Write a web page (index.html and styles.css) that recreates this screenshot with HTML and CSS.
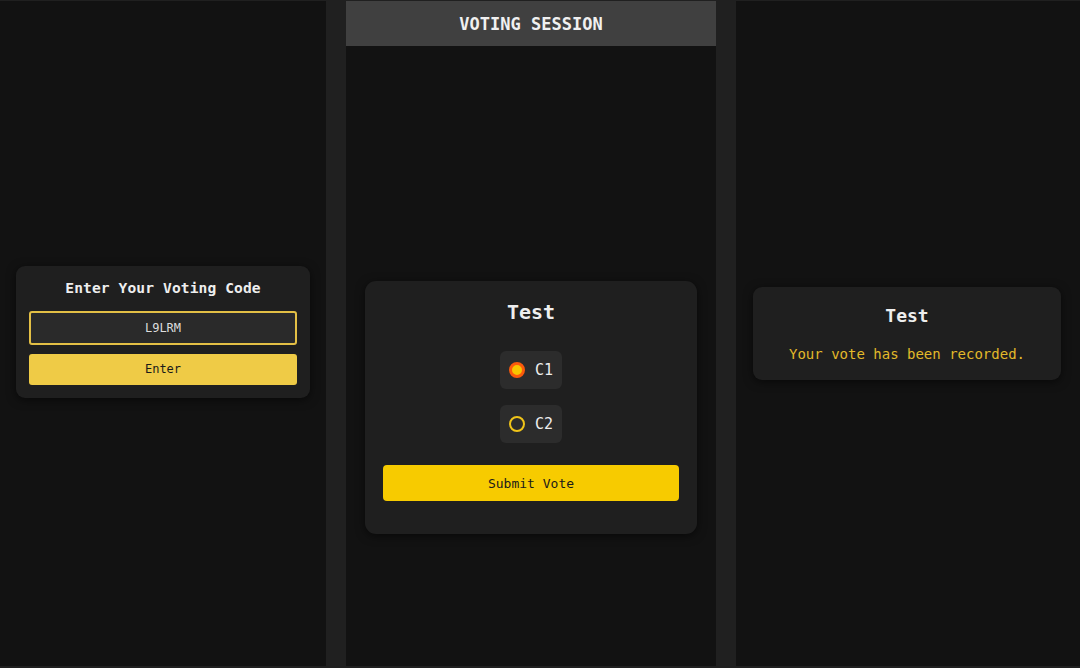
FILE: index.html
```html
<!DOCTYPE html>
<html>
<head>
<meta charset="utf-8">
<link rel="stylesheet" href="styles.css">
</head>
<body>
<div class="screens">
  <section class="panel panel-left">
    <div class="card code-card">
      <h2 class="code-title">Enter Your Voting Code</h2>
      <div class="code-input">L9LRM</div>
      <button class="btn btn-enter">Enter</button>
    </div>
  </section>
  <section class="panel panel-mid">
    <header class="session-header">VOTING SESSION</header>
    <div class="session-body">
      <div class="card vote-card">
        <h2 class="vote-title">Test</h2>
        <div class="options">
          <label class="option"><span class="radio radio-on"></span><span class="opt-label">C1</span></label>
          <label class="option"><span class="radio"></span><span class="opt-label">C2</span></label>
        </div>
        <button class="btn btn-submit">Submit Vote</button>
      </div>
    </div>
  </section>
  <section class="panel panel-right">
    <div class="card done-card">
      <h2 class="done-title">Test</h2>
      <p class="done-text">Your vote has been recorded.</p>
    </div>
  </section>
</div>
</body>
</html>
```
FILE: styles.css
```css
html, body {
  margin: 0;
  padding: 0;
  background: #202020;
  width: 1080px;
  height: 668px;
  overflow: hidden;
  font-family: "DejaVu Sans Mono", "Liberation Mono", monospace;
  color: #eeeeee;
}
.screens {
  display: flex;
  gap: 20px;
  padding-top: 1px;
  height: 665px;
}
.panel {
  background: #121212;
  height: 665px;
  display: flex;
  flex-direction: column;
}
.panel-left { width: 326px; align-items: center; justify-content: center; }
.panel-mid { width: 370px; }
.panel-right { width: 344px; align-items: center; justify-content: center; }

.card {
  background: #1f1f1f;
  border-radius: 9px;
  box-shadow: 0 2px 10px rgba(0,0,0,0.55);
  box-sizing: border-box;
}
h2, p { margin: 0; }
.btn {
  border: none;
  font-family: inherit;
  color: #1a1a1a;
  display: block;
  width: 100%;
  cursor: pointer;
}

.code-card {
  width: 294px;
  padding: 12px 13px 13px;
  display: flex;
  flex-direction: column;
  margin-top: -4px;
}
.code-title {
  font-size: 14.6px;
  line-height: 20px;
  font-weight: bold;
  text-align: center;
  margin-bottom: 13px;
  color: #eeeeee;
  letter-spacing: 0.1px;
}
.code-input {
  height: 34px;
  box-sizing: border-box;
  border: 2px solid #e3bf45;
  border-radius: 3px;
  background: #2a2a2a;
  color: #dddddd;
  font-size: 12px;
  line-height: 30px;
  text-align: center;
  margin-bottom: 9px;
}
.btn-enter {
  height: 31px;
  background: #efcb46;
  border-radius: 3px;
  font-size: 12px;
}

.session-header {
  height: 45px;
  background: #404040;
  color: #f0f0f0;
  font-size: 17px;
  font-weight: bold;
  display: flex;
  align-items: center;
  justify-content: center;
  flex-shrink: 0;
}
.session-body {
  flex: 1;
  display: flex;
  justify-content: center;
  align-items: flex-start;
  padding-top: 235px;
}
.vote-card {
  width: 332px;
  padding: 18px 18px 33px;
  border-radius: 11px;
  display: flex;
  flex-direction: column;
  align-items: center;
}
.vote-title {
  font-size: 20px;
  line-height: 26px;
  font-weight: bold;
  margin-bottom: 26px;
}
.options {
  display: flex;
  flex-direction: column;
  align-items: center;
  gap: 16px;
  margin-bottom: 22px;
}
.option {
  display: flex;
  align-items: center;
  gap: 10px;
  height: 38px;
  padding: 0 9px;
  background: #2c2c2c;
  border-radius: 6px;
  box-sizing: border-box;
}
.radio {
  width: 16px;
  height: 16px;
  box-sizing: border-box;
  border-radius: 50%;
  border: 2px solid #f0c419;
}
.radio-on {
  border: 3px solid #fb5a0c;
  background: #f7c600;
}
.opt-label {
  font-size: 15px;
  color: #eeeeee;
}
.btn-submit {
  height: 36px;
  background: #f7cb00;
  border-radius: 4px;
  font-size: 13px;
}

.done-card {
  width: 308px;
  padding: 17px 12px 17px;
  margin-left: -2px;
  text-align: center;
}
.done-title {
  font-size: 18px;
  line-height: 24px;
  font-weight: bold;
  margin-bottom: 17px;
}
.done-text {
  font-size: 14px;
  line-height: 18px;
  color: #e2b92a;
}
```
